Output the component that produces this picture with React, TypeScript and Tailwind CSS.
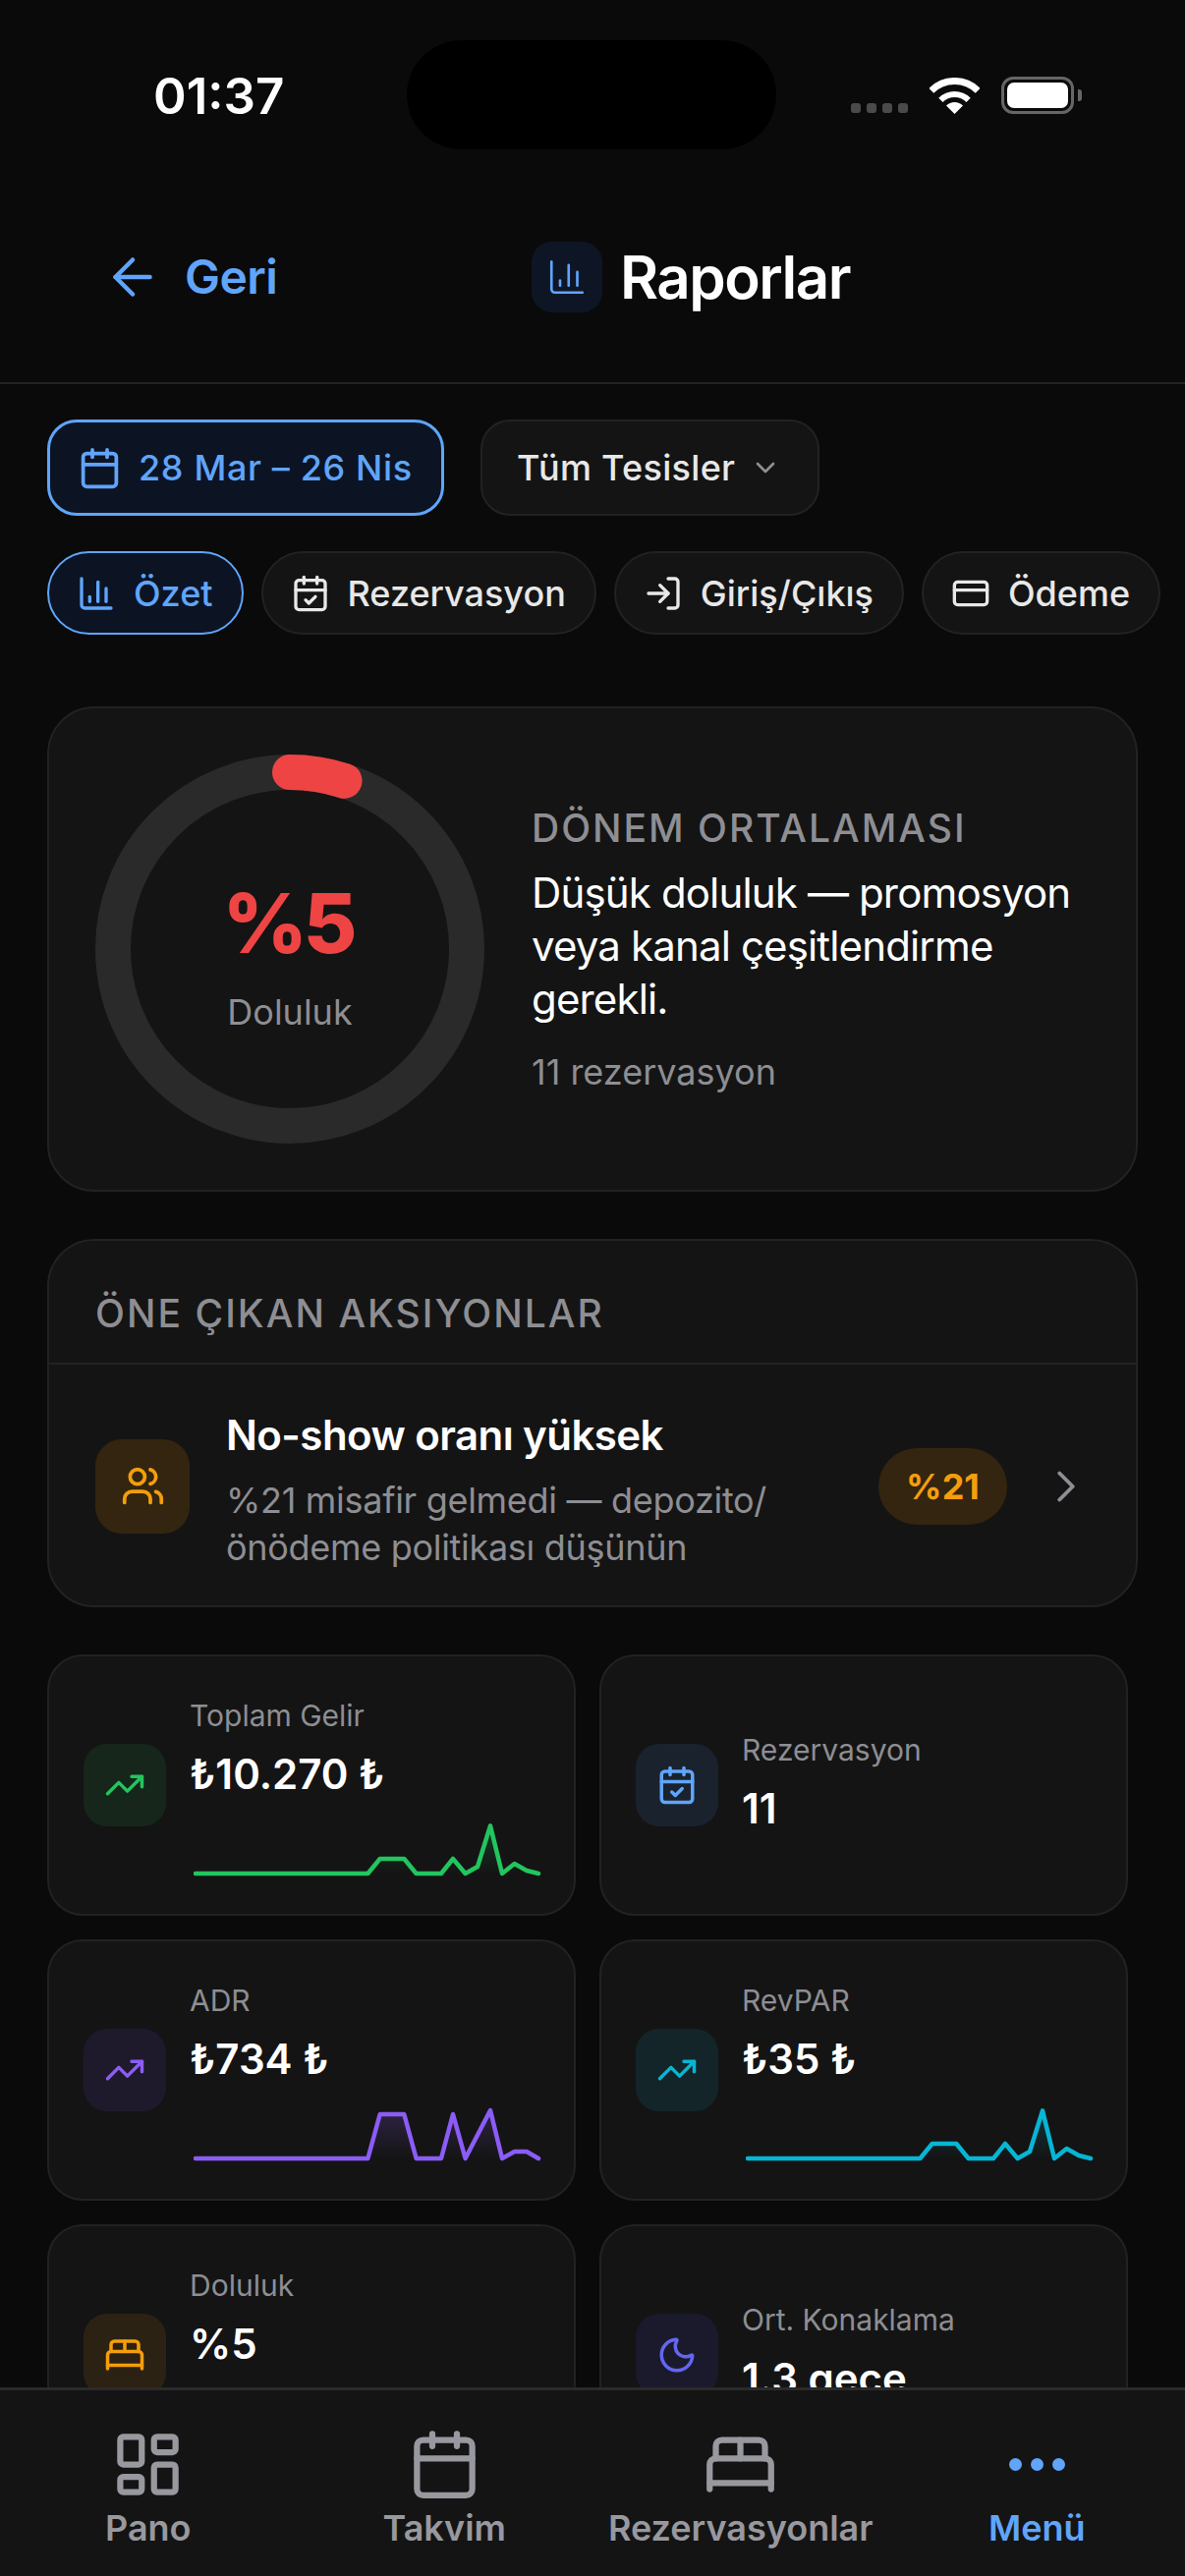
import React from "react";
import { ArrowLeft, ChartColumn, Calendar, ChevronDown, ChevronRight, CalendarCheck, LogIn, CreditCard, Users, TrendingUp, BedDouble, Moon, LayoutDashboard } from "lucide-react";

const F = { fontFamily: 'Inter, "Noto Sans", sans-serif' };

const lowA = [[0,0],[175.4,0],[187.7,-15],[212.3,-15],[224.6,0],[250,0],[262,-15],[274.6,0],[287,-7],[300,-48.6],[312,0],[324.6,-10],[337,-3],[349,0]];
const lowB = [[0,0],[175.4,0],[187.7,-45],[212.3,-45],[224.6,0],[250,0],[262,-45],[274.6,0],[300,-49],[312,0],[324.6,-7],[337,-7],[349,0]];

function Spark({ pts, color, id }: { pts: number[][]; color: string; id: string }) {
  const line = pts.map(([x, y]) => `${x + 2},${y + 54}`).join(" ");
  return (
    <svg width="354" height="60" className="absolute left-[147px] top-[167px]">
      <defs>
        <linearGradient id={id} x1="0" x2="0" y1="0" y2="1">
          <stop offset="0" stopColor={color} stopOpacity="0.22" />
          <stop offset="1" stopColor={color} stopOpacity="0" />
        </linearGradient>
      </defs>
      <polygon points={`2,54 ${line} 351,54`} fill={`url(#${id})`} />
      <polyline points={line} fill="none" stroke={color} strokeWidth="4.5" strokeLinejoin="round" strokeLinecap="round" />
    </svg>
  );
}

function Stat({ icon, bg, label, value, spark }: { icon: React.ReactNode; bg: string; label: string; value: string; spark?: React.ReactNode }) {
  return (
    <div className="relative flex h-[266px] items-center gap-[24px] rounded-[36px] border-2 border-[#222222] bg-[#141414] pl-[35px] pr-[20px]">
      <div className={`flex h-[84px] w-[84px] shrink-0 items-center justify-center rounded-[24px] ${bg}`}>{icon}</div>
      <div className={`flex flex-col ${spark ? "mb-[80px]" : "mb-[10px]"}`}>
        <span className="text-[30px] leading-[44px] text-[#8e8e93]">{label}</span>
        <span className="mt-[13px] text-[42px] font-semibold leading-[50px] text-white">{value}</span>
      </div>
      {spark}
    </div>
  );
}

function Tab({ icon, label, active }: { icon: React.ReactNode; label: string; active?: boolean }) {
  return (
    <div className="flex h-[186px] flex-1 flex-col items-center pt-[39px]">
      <div className="flex h-[72px] items-center justify-center">{icon}</div>
      <span className={`mt-[7px] text-[36px] font-semibold leading-[44px] ${active ? "text-[#60a5fa]" : "text-[#98989f]"}`}>{label}</span>
    </div>
  );
}

function Chip({ icon, label, active }: { icon: React.ReactNode; label: string; active?: boolean }) {
  return (
    <div className={`flex h-[85px] shrink-0 items-center gap-[18px] rounded-full border-2 pl-[28px] pr-[29px] text-[36px] font-[550] ${active ? "border-[#60a5fa] bg-[#0c1424] text-[#60a5fa]" : "border-[#222222] bg-[#141414] text-[#e8e8e8]"}`}>
      {icon}
      <span>{label}</span>
    </div>
  );
}

export default function App() {
  return (
    <div style={F} className="relative h-[2622px] w-[1206px] overflow-hidden bg-[#0a0a0a] text-white">
      {/* status bar */}
      <div className="relative flex h-[192px] items-start pl-[156px] pt-[70px]">
        <span className="text-[51px] font-semibold leading-[56px] text-white">01:37</span>
        <div className="absolute left-[414px] top-[41px] h-[111px] w-[376px] rounded-full bg-black" />
        <div className="ml-[577px] mt-[8px] flex h-[38px] items-end">
          <div className="mb-[1px] flex items-center gap-[6px]">
            <i className="h-[10px] w-[10px] rounded-[3px] bg-[#4a4a4a]" />
            <i className="h-[10px] w-[10px] rounded-[3px] bg-[#4a4a4a]" />
            <i className="h-[10px] w-[10px] rounded-[3px] bg-[#4a4a4a]" />
            <i className="h-[10px] w-[10px] rounded-[3px] bg-[#4a4a4a]" />
          </div>
          <svg width="51" height="37" viewBox="0 0 51 37" className="ml-[22px]">
            <path d="M25.5 37 L17 28.5 A12 12 0 0 1 34 28.5 Z" fill="#fff" />
            <path d="M11.4 22.9 A20 20 0 0 1 39.6 22.9" fill="none" stroke="#fff" strokeWidth="6" />
            <path d="M1.8 13.3 A33.5 33.5 0 0 1 49.2 13.3" fill="none" stroke="#fff" strokeWidth="7" />
          </svg>
          <div className="ml-[22px] flex items-center">
            <div className="flex h-[38px] w-[74px] items-center justify-center rounded-[12px] border-[3px] border-[#666666] p-[3px]">
              <div className="h-full w-full rounded-[7px] bg-white" />
            </div>
            <div className="ml-[4px] h-[12px] w-[4px] rounded-r-[3px] bg-[#666666]" />
          </div>
        </div>
      </div>

      {/* header */}
      <header className="flex h-[199px] items-center border-b-2 border-[#222222] pb-[18px] pl-[105px]">
        <div className="flex items-center gap-[23px] text-[#60a5fa]">
          <ArrowLeft size={60} strokeWidth={1.8} />
          <span className="w-[94px] text-[48px] font-semibold leading-[72px] tracking-[-0.5px]">Geri</span>
        </div>
        <div className="ml-[259px] flex items-center gap-[18px]">
          <div className="flex h-[72px] w-[72px] items-center justify-center rounded-[21px] bg-[#0e1626]">
            <ChartColumn size={42} strokeWidth={1.5} className="text-[#60a5fa]" />
          </div>
          <span className="text-[60px] font-semibold leading-[72px] tracking-[-1.5px]">Raporlar</span>
        </div>
      </header>

      {/* filters */}
      <div className="mt-[36px] flex gap-[37px] pl-[48px]">
        <div className="flex h-[98px] w-[404px] items-center gap-[17px] rounded-[30px] border-[3px] border-[#60a5fa] bg-[#0c1424] pl-[28px] text-[36px] font-[550] tracking-[0.65px] text-[#60a5fa]">
          <Calendar size={45} strokeWidth={2} />
          <span>28 Mar – 26 Nis</span>
        </div>
        <div className="flex h-[98px] w-[345px] items-center gap-[15px] rounded-[30px] border-2 border-[#222222] bg-[#141414] pl-[35px] text-[36px] font-[550] tracking-[0.3px] text-[#e8e8e8]">
          <span>Tüm Tesisler</span>
          <ChevronDown size={32} strokeWidth={2} className="text-[#8e8e93]" />
        </div>
      </div>

      {/* chips */}
      <div className="mt-[36px] flex gap-[18px] pl-[48px]">
        <Chip active label="Özet" icon={<ChartColumn size={40} strokeWidth={2} />} />
        <Chip label="Rezervasyon" icon={<CalendarCheck size={40} strokeWidth={2} />} />
        <Chip label="Giriş/Çıkış" icon={<LogIn size={40} strokeWidth={2} />} />
        <Chip label="Ödeme" icon={<CreditCard size={40} strokeWidth={2} />} />
      </div>

      {/* occupancy */}
      <section className="mx-[48px] mt-[73px] flex h-[494px] items-center gap-[48px] rounded-[48px] border-2 border-[#222222] bg-[#141414] pl-[47px]">
        <div className="relative h-[396px] w-[396px] shrink-0">
          <svg width="396" height="396" viewBox="0 0 396 396" className="-rotate-90">
            <circle cx="198" cy="198" r="180" fill="none" stroke="#2a2a2a" strokeWidth="36" />
            <circle cx="198" cy="198" r="180" fill="none" stroke="#ef4444" strokeWidth="36" strokeLinecap="round" strokeDasharray="56.5 1131" />
          </svg>
          <div className="absolute inset-0 flex flex-col items-center justify-center pt-[10px]">
            <span className="pr-[4px] text-[84px] font-extrabold leading-[100px] tracking-[-4px] text-[#ef4444]">%5</span>
            <span className="mt-[18px] text-[36px] leading-[44px] text-[#8e8e93]">Doluluk</span>
          </div>
        </div>
        <div className="flex flex-col">
          <span className="text-[39px] font-medium leading-[48px] tracking-[2px] text-[#8e8e93]">DÖNEM ORTALAMASI</span>
          <p className="mt-[15px] w-[580px] text-[42px] leading-[54px] tracking-[-0.85px] text-white">Düşük doluluk — promosyon veya kanal çeşitlendirme gerekli.</p>
          <span className="mt-[25px] text-[36px] leading-[44px] text-[#8e8e93]">11 rezervasyon</span>
        </div>
      </section>

      {/* actions */}
      <section className="mx-[48px] mt-[48px] h-[375px] rounded-[48px] border-2 border-[#222222] bg-[#141414]">
        <div className="flex h-[126px] items-center border-b-2 border-[#222222] pl-[47px] pt-[24px]">
          <span className="text-[39px] font-medium tracking-[2.05px] text-[#8e8e93]">ÖNE ÇIKAN AKSIYONLAR</span>
        </div>
        <div className="flex h-[247px] items-center pl-[47px] pr-[44px]">
          <div className="flex h-[96px] w-[96px] shrink-0 items-center justify-center rounded-[27px] bg-[#33250f]">
            <Users size={45} strokeWidth={2} className="text-[#f59e0b]" />
          </div>
          <div className="ml-[37px] flex flex-1 flex-col pt-[8px]">
            <span className="text-[42px] font-semibold leading-[52px] tracking-[-0.55px] text-white">No-show oranı yüksek</span>
            <span className="mt-[16px] w-[600px] text-[36px] leading-[48px] tracking-[-0.3px] text-[#8e8e93]">%21 misafir gelmedi — depozito/ önödeme politikası düşünün</span>
          </div>
          <div className="flex h-[78px] w-[131px] shrink-0 items-center justify-center rounded-full bg-[#33250f] text-[36px] font-bold text-[#f59e0b]">%21</div>
          <ChevronRight size={54} strokeWidth={1.7} className="ml-[33px] text-[#8e8e93]" />
        </div>
      </section>

      {/* stats */}
      <div className="ml-[48px] mt-[48px] grid w-[1100px] grid-cols-2 gap-x-[24px] gap-y-[24px]">
        <Stat bg="bg-[#16261a]" icon={<TrendingUp size={42} strokeWidth={2} className="text-[#22c55e]" />} label="Toplam Gelir" value="₺10.270 ₺" spark={<Spark id="g1" pts={lowA} color="#22c55e" />} />
        <Stat bg="bg-[#1a222e]" icon={<CalendarCheck size={42} strokeWidth={2} className="text-[#60a5fa]" />} label="Rezervasyon" value="11" />
        <Stat bg="bg-[#1e1a2c]" icon={<TrendingUp size={42} strokeWidth={2} className="text-[#8b5cf6]" />} label="ADR" value="₺734 ₺" spark={<Spark id="g2" pts={lowB} color="#8b5cf6" />} />
        <Stat bg="bg-[#14252a]" icon={<TrendingUp size={42} strokeWidth={2} className="text-[#06b6d4]" />} label="RevPAR" value="₺35 ₺" spark={<Spark id="g3" pts={lowA} color="#06b6d4" />} />
        <Stat bg="bg-[#2c2213]" icon={<BedDouble size={42} strokeWidth={2} className="text-[#f59e0b]" />} label="Doluluk" value="%5" spark={<span />} />
        <Stat bg="bg-[#1a1a2c]" icon={<Moon size={42} strokeWidth={2} className="text-[#6366f1]" />} label="Ort. Konaklama" value="1.3 gece" />
      </div>

      {/* tab bar */}
      <nav className="absolute bottom-0 left-0 right-0 flex h-[192px] border-t-[3px] border-[#2a2a2a] bg-[#141414]">
        <Tab label="Pano" icon={<LayoutDashboard size={75} strokeWidth={2} className="text-[#98989f]" />} />
        <Tab label="Takvim" icon={<Calendar size={75} strokeWidth={2} className="text-[#98989f]" />} />
        <Tab label="Rezervasyonlar" icon={<BedDouble size={75} strokeWidth={2} className="text-[#98989f]" />} />
        <Tab active label="Menü" icon={
          <div className="flex gap-[9px]">
            <i className="h-[13px] w-[13px] rounded-full bg-[#60a5fa]" />
            <i className="h-[13px] w-[13px] rounded-full bg-[#60a5fa]" />
            <i className="h-[13px] w-[13px] rounded-full bg-[#60a5fa]" />
          </div>
        } />
      </nav>
    </div>
  );
}
